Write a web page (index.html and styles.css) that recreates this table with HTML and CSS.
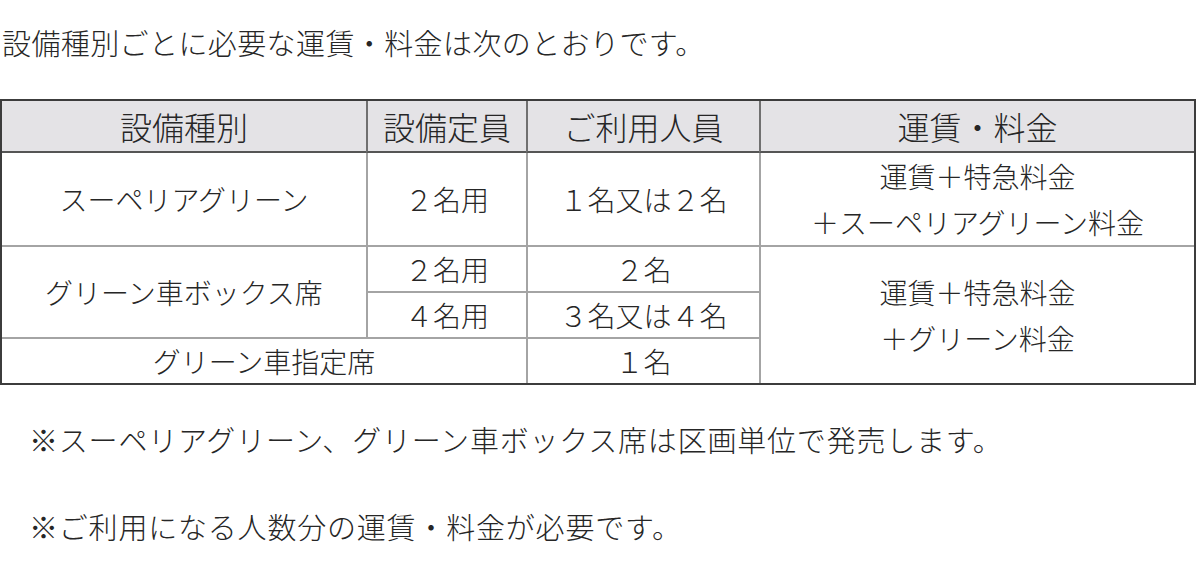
FILE: index.html
```html
<!DOCTYPE html>
<html lang="ja">
<head>
<meta charset="utf-8">
<title>設備種別ごとの運賃・料金</title>
<link rel="stylesheet" href="styles.css">
</head>
<body>
<p class="intro">設備種別ごとに必要な運賃・料金は次のとおりです。</p>
<table class="fare">
  <colgroup>
    <col class="c1"><col class="c2"><col class="c3"><col class="c4">
  </colgroup>
  <thead>
    <tr>
      <th>設備種別</th>
      <th class="l">設備定員</th>
      <th class="l">ご利用人員</th>
      <th class="l">運賃・料金</th>
    </tr>
  </thead>
  <tbody>
    <tr>
      <td>スーペリアグリーン</td>
      <td class="l">２名用</td>
      <td class="l">１名又は２名</td>
      <td class="l multi">運賃＋特急料金<br>＋スーペリアグリーン料金</td>
    </tr>
    <tr>
      <td class="t" rowspan="2">グリーン車ボックス席</td>
      <td class="l t">２名用</td>
      <td class="l t">２名</td>
      <td class="l t multi" rowspan="3">運賃＋特急料金<br>＋グリーン料金</td>
    </tr>
    <tr>
      <td class="l t">４名用</td>
      <td class="l t">３名又は４名</td>
    </tr>
    <tr>
      <td class="t" colspan="2">グリーン車指定席</td>
      <td class="l t">１名</td>
    </tr>
  </tbody>
</table>
<p class="note first">※スーペリアグリーン、グリーン車ボックス席は区画単位で発売します。</p>
<p class="note">※ご利用になる人数分の運賃・料金が必要です。</p>
</body>
</html>
```

FILE: styles.css
```css
html, body {
  margin: 0;
  padding: 0;
  background: #ffffff;
}

body {
  font-family: "Noto Sans CJK JP", "Noto Sans", sans-serif;
  font-weight: 300;
  color: #262626;
}

.intro {
  margin: 22px 0 0 2px;
  font-size: 29px;
  line-height: 40px;
  letter-spacing: 0.4px;
}

.fare {
  margin-top: 37px;
  width: 1196px;
  table-layout: fixed;
  border-collapse: separate;
  border-spacing: 0;
  border: 2px solid #3c3c3c;
}

.c1 { width: 364px; }
.c2 { width: 160px; }
.c3 { width: 233px; }
.c4 { width: 435px; }

.fare th,
.fare td {
  padding: 0;
  text-align: center;
  vertical-align: middle;
  white-space: nowrap;
}

.fare th {
  background: #e4e3e6;
  font-weight: 300;
  font-size: 32px;
  line-height: 50px;
  border-bottom: 2px solid #555555;
}

.fare th.l {
  border-left: 2px solid #707070;
}

.fare td {
  font-size: 28px;
  line-height: 44px;
}

.fare td.multi {
  line-height: 46px;
}

.fare td.l {
  border-left: 2px solid #a4a4a4;
}

.fare td.t {
  border-top: 2px solid #a4a4a4;
}

.note {
  margin: 0 0 0 29px;
  font-size: 29px;
  line-height: 40px;
  letter-spacing: 0.8px;
}

.note.first {
  margin-top: 34px;
  margin-bottom: 47px;
}
```
